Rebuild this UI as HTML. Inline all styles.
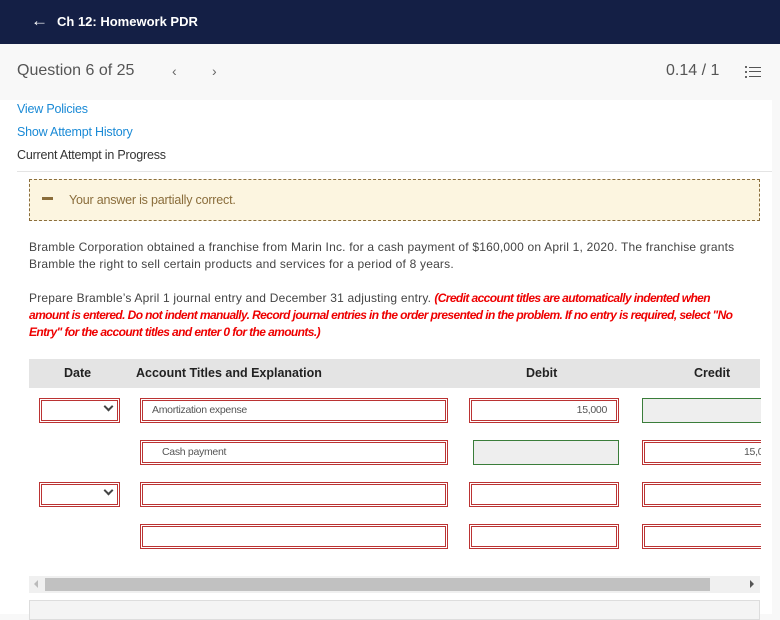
<!DOCTYPE html>
<html><head><style>
*{margin:0;padding:0;box-sizing:border-box}
body{width:780px;height:614px;overflow:hidden;background:#f8f8f8;font-family:"Liberation Sans",sans-serif;position:relative;color:#333}
.a{position:absolute}
.top{left:0;top:0;width:780px;height:44px;background:#141f45;color:#fff;font-weight:bold;font-size:13px}
.white{left:0;top:100px;width:772px;height:514px;background:#fff}
.inp{position:absolute;border:1px solid #b33;background:#fff;height:25px}
.inp::after{content:"";position:absolute;left:1px;top:1px;right:1px;bottom:1px;border:1px solid #b33}
.gr{position:absolute;border:1px solid #3a7d3a;background:#eee;height:25px}
.t{font-size:10.5px;color:#555;letter-spacing:-0.3px;position:absolute;top:5px}
.chev{position:absolute;right:7px;top:4px;width:7px;height:7px;border-right:2px solid #444;border-bottom:2px solid #444;transform:rotate(45deg)}
p{font-size:12px;letter-spacing:-0.2px;line-height:17px;color:#444;white-space:nowrap}
.clip{position:absolute;left:0;top:380px;width:761px;height:200px;overflow:hidden}
</style></head><body>
<div class="a top"><span class="a" style="left:31px;top:11px;font-size:17px;font-weight:normal">&#8592;</span><span class="a" style="left:57px;top:14px">Ch 12: Homework PDR</span></div>
<div class="a" style="left:17px;top:62px;font-size:16px;color:#555">Question 6 of 25</div>
<div class="a" style="left:172px;top:63px;font-size:14px;color:#666">&#8249;</div>
<div class="a" style="left:212px;top:63px;font-size:14px;color:#666">&#8250;</div>
<div class="a" style="left:666px;top:62px;font-size:16px;color:#555">0.14 / 1</div>
<div class="a" style="left:745px;top:66px;width:16px;height:12px">
<div class="a" style="left:0;top:0;width:2px;height:2px;background:#666"></div><div class="a" style="left:4px;top:1px;width:12px;height:1px;background:#555"></div>
<div class="a" style="left:0;top:5px;width:2px;height:2px;background:#666"></div><div class="a" style="left:4px;top:5px;width:12px;height:1px;background:#555"></div>
<div class="a" style="left:0;top:10px;width:2px;height:2px;background:#666"></div><div class="a" style="left:4px;top:10px;width:12px;height:1px;background:#555"></div></div>
<div class="a white"></div>
<div class="a" style="left:17px;top:102px;font-size:12.5px;color:#1a8ad6;letter-spacing:-0.2px">View Policies</div>
<div class="a" style="left:17px;top:125px;font-size:12.5px;color:#1a8ad6;letter-spacing:-0.2px">Show Attempt History</div>
<div class="a" style="left:17px;top:148px;font-size:12.5px;color:#333;letter-spacing:-0.2px">Current Attempt in Progress</div>
<div class="a" style="left:17px;top:171px;width:755px;height:1px;background:#e4e4e4"></div>
<div class="a" style="left:29px;top:179px;width:731px;height:42px;background:#fcf5e0;border:1px dashed #8a6d3b"></div>
<div class="a" style="left:42px;top:197px;width:11px;height:3px;background:#8a6d3b"></div>
<div class="a" style="left:69px;top:193px;font-size:12.5px;color:#8a6d3b;letter-spacing:-0.2px">Your answer is partially correct.</div>
<p class="a" style="left:29px;top:239px;letter-spacing:0.2px">Bramble Corporation obtained a franchise from Marin Inc. for a cash payment of $160,000 on April 1, 2020. The franchise grants<br>Bramble the right to sell certain products and services for a period of 8 years.</p>
<p class="a" style="left:29px;top:290px"><span style="letter-spacing:0.2px">Prepare Bramble’s April 1 journal entry and December 31 adjusting entry.</span> <i style="color:#e00;font-weight:bold;letter-spacing:-0.6px">(Credit account titles are automatically indented when<br>amount is entered. Do not indent manually. Record journal entries in the order presented in the problem. If no entry is required, select "No<br>Entry" for the account titles and enter 0 for the amounts.)</i></p>
<div class="a" style="left:29px;top:359px;width:731px;height:29px;background:#e4e4e4;font-weight:bold;font-size:12.5px;color:#222">
<span class="a" style="left:35px;top:7px">Date</span><span class="a" style="left:107px;top:7px">Account Titles and Explanation</span><span class="a" style="left:497px;top:7px">Debit</span><span class="a" style="left:665px;top:7px">Credit</span></div>
<div class="clip">
<div class="inp" style="left:39px;top:18px;width:81px"><span class="chev"></span></div>
<div class="inp" style="left:140px;top:18px;width:308px"><span class="t" style="left:11px">Amortization expense</span></div>
<div class="inp" style="left:469px;top:18px;width:150px"><span class="t" style="right:11px">15,000</span></div>
<div class="gr" style="left:642px;top:18px;width:130px"></div>
<div class="inp" style="left:140px;top:60px;width:308px"><span class="t" style="left:21px">Cash payment</span></div>
<div class="gr" style="left:473px;top:60px;width:146px"></div>
<div class="inp" style="left:642px;top:60px;width:130px"><span class="t" style="left:101px">15,0</span></div>
<div class="inp" style="left:39px;top:102px;width:81px"><span class="chev"></span></div>
<div class="inp" style="left:140px;top:102px;width:308px"></div>
<div class="inp" style="left:469px;top:102px;width:150px"></div>
<div class="inp" style="left:642px;top:102px;width:130px"></div>
<div class="inp" style="left:140px;top:144px;width:308px"></div>
<div class="inp" style="left:469px;top:144px;width:150px"></div>
<div class="inp" style="left:642px;top:144px;width:130px"></div>
</div>
<div class="a" style="left:29px;top:576px;width:731px;height:17px;background:#f0f0f0"></div>
<div class="a" style="left:45px;top:578px;width:665px;height:13px;background:#c1c1c1"></div>
<div class="a" style="left:34px;top:580px;border:4px solid transparent;border-right-color:#bbb;border-left:0"></div>
<div class="a" style="left:750px;top:580px;border:4px solid transparent;border-left-color:#555;border-right:0"></div>
<div class="a" style="left:29px;top:600px;width:731px;height:20px;background:#f4f4f4;border:1px solid #ddd"></div>
</body></html>
